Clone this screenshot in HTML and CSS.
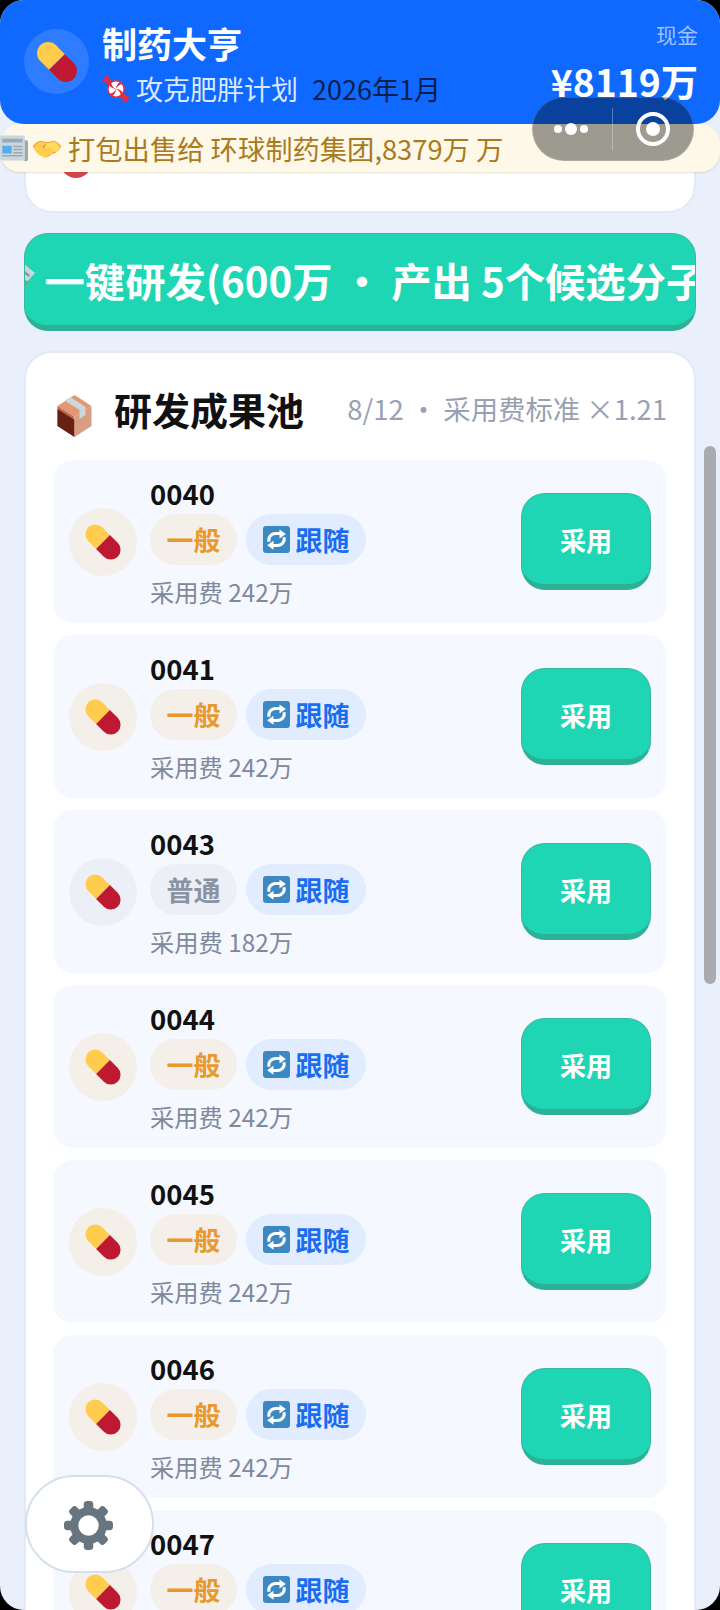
FILE: index.html
```html
<!DOCTYPE html>
<html>
<head>
  <title>制药大亨</title>
  <link rel="stylesheet" href="styles.css">
</head>

<body>
  <svg class="icon-defs" width="0" height="0">
    <symbol id="pill" viewBox="0 0 36 36">
      <g transform="rotate(45 18 18)">
        <path fill="#ffcc4d" d="M9 10h9v16H9a8 8 0 0 1 0-16z"/>
        <path fill="#be1931" d="M18 10h9a8 8 0 0 1 0 16h-9z"/>
      </g>
    </symbol>
    <symbol id="repeat" viewBox="0 0 36 36">
      <rect width="36" height="36" rx="4" fill="#3b88c3"/>
      <path fill="none" stroke="#fff" stroke-width="4" d="M8 21c-1.500-6 3-11 9-11h6"/>
      <path fill="#fff" d="M22 4.500 30.500 10.500 22 16.500z"/>
      <path fill="none" stroke="#fff" stroke-width="4" d="M28 15c1.500 6-3 11-9 11h-6"/>
      <path fill="#fff" d="M14 19.500 5.500 25.500 14 31.500z"/>
    </symbol>
  </svg>

  <div class="screen">
    <header class="topbar">
      <div class="topbar__avatar"><svg class="topbar__pill"><use href="#pill"/></svg></div>
      <div class="topbar__info">
        <h1 class="topbar__title">制药大亨</h1>
        <div class="topbar__sub">
          <svg class="topbar__candy" viewBox="0 0 36 36">
            <path fill="#dd2e44" d="M0 7 7 0l5 7 4 5-4 4-4-4zM36 29l-7 7-5-7-4-5 4-4 4 4z"/>
            <circle cx="18" cy="18" r="11.500" fill="#dd2e44"/>
            <circle cx="18" cy="18" r="9.500" fill="#fff"/>
            <g fill="#dd2e44">
              <path d="M18 18c0-4 2-7 5-9l3 3c-3 0-6 2-8 6z"/>
              <path d="M18 18c4 0 7 2 9 5l-3 3c0-3-2-6-6-8z"/>
              <path d="M18 18c0 4-2 7-5 9l-3-3c3 0 6-2 8-6z"/>
              <path d="M18 18c-4 0-7-2-9-5l3-3c0 3 2 6 6 8z"/>
            </g>
          </svg>
          <span class="topbar__plan">攻克肥胖计划</span>
          <span class="topbar__date">2026年1月</span>
        </div>
      </div>
      <div class="topbar__cash">
        <span class="topbar__cash-label">现金</span>
        <span class="topbar__cash-value">¥8119万</span>
      </div>
    </header>

    <div class="ticker">
      <svg class="ticker__paper" viewBox="0 0 36 36">
        <path fill="#99aab5" d="M30 8h4a2 2 0 0 1 2 2v22a3 3 0 0 1-6 0z"/>
        <path fill="#ccd6dd" d="M0 4a2 2 0 0 1 2-2h28a2 2 0 0 1 2 2v30H3a3 3 0 0 1-3-3z"/>
        <path fill="#99aab5" d="M3 6h26v5H3zM17 15h12v2H17zM17 19h12v2H17zM17 23h12v2H17zM3 27h26v2H3z"/>
        <path fill="#55acee" d="M3 15h12v10H3z"/>
      </svg>
      <svg class="ticker__hands" viewBox="0 0 36 36">
        <path fill="#f19020" d="M0 16c3-5 7-7 11-7l7 2 7-2c4 0 8 2 11 7-2 5-6 8-10 9l-6 4c-3 1-5 0-7-2-6-1-10-6-13-11z"/>
        <path fill="#ffcc4d" d="M1 17c3-5 6-7 10-7l7 2-5 3c-1 2 1 4 4 3l5-2 6 6-5 5-3 1-3 2c-3 1-5 0-6-2-5-1-8-6-10-11z"/>
        <path fill="#ffdc5d" d="M18 12l7-2c4 0 7 2 10 7-1 3-3 5-6 7l-7-7-5 2c-2 0-3-2-2-3z"/>
      </svg>
      <span class="ticker__text">打包出售给 环球制药集团,8379万 万</span>
    </div>

    <div class="capsule">
      <div class="capsule__dots"><i></i><i class="capsule__dot-big"></i><i></i></div>
      <div class="capsule__ring"></div>
    </div>

    <main class="content">
      <section class="card card--prev"><div class="card__peek"></div></section>

      <button class="research-btn">
        <svg class="research-btn__tube" viewBox="0 0 36 36">
          <path fill="#ccd6dd" d="M24 1 36 11 27 21 15 11z"/>
          <path fill="#8899a6" d="M22 6 31 13 29.500 15 20.500 8z"/>
          <path fill="#77b255" d="M21 15 30 20 25 26 17 21z"/>
        </svg>
        <span class="research-btn__label">一键研发(600万 · 产出 5个候选分子)</span>
      </button>

      <section class="card">
        <div class="pool-head">
          <svg class="pool-head__box" viewBox="0 0 36 44">
            <path fill="#e59672" d="M18 1 35 12 18 23 1 12z"/>
            <path fill="#c1694f" d="M1 12 18 23v20L1 32z"/>
            <path fill="#662113" d="M1 15 18 26v17L1 32z"/>
            <path fill="#d99e82" d="M35 12 18 23v20l17-11z"/>
            <path fill="#ccd6dd" d="M8 6.500 14 3l15 10v8l-6 4v-9z"/>
          </svg>
          <h2 class="pool-head__title">研发成果池</h2>
          <span class="pool-head__meta">8/12 · 采用费标准 ×1.21</span>
        </div>

        <ul class="pool">
          <li class="pool__item">
            <div class="pool__icon"><svg><use href="#pill"/></svg></div>
            <div class="pool__body">
              <span class="pool__name">0040</span>
              <div class="pool__tags"><span class="tag tag--common">一般</span><span class="tag tag--follow"><svg><use href="#repeat"/></svg>跟随</span></div>
              <span class="pool__fee">采用费 242万</span>
            </div>
            <button class="adopt-btn">采用</button>
          </li>
          <li class="pool__item">
            <div class="pool__icon"><svg><use href="#pill"/></svg></div>
            <div class="pool__body">
              <span class="pool__name">0041</span>
              <div class="pool__tags"><span class="tag tag--common">一般</span><span class="tag tag--follow"><svg><use href="#repeat"/></svg>跟随</span></div>
              <span class="pool__fee">采用费 242万</span>
            </div>
            <button class="adopt-btn">采用</button>
          </li>
          <li class="pool__item">
            <div class="pool__icon pool__icon--plain"><svg><use href="#pill"/></svg></div>
            <div class="pool__body">
              <span class="pool__name">0043</span>
              <div class="pool__tags"><span class="tag tag--plain">普通</span><span class="tag tag--follow"><svg><use href="#repeat"/></svg>跟随</span></div>
              <span class="pool__fee">采用费 182万</span>
            </div>
            <button class="adopt-btn">采用</button>
          </li>
          <li class="pool__item">
            <div class="pool__icon"><svg><use href="#pill"/></svg></div>
            <div class="pool__body">
              <span class="pool__name">0044</span>
              <div class="pool__tags"><span class="tag tag--common">一般</span><span class="tag tag--follow"><svg><use href="#repeat"/></svg>跟随</span></div>
              <span class="pool__fee">采用费 242万</span>
            </div>
            <button class="adopt-btn">采用</button>
          </li>
          <li class="pool__item">
            <div class="pool__icon"><svg><use href="#pill"/></svg></div>
            <div class="pool__body">
              <span class="pool__name">0045</span>
              <div class="pool__tags"><span class="tag tag--common">一般</span><span class="tag tag--follow"><svg><use href="#repeat"/></svg>跟随</span></div>
              <span class="pool__fee">采用费 242万</span>
            </div>
            <button class="adopt-btn">采用</button>
          </li>
          <li class="pool__item">
            <div class="pool__icon"><svg><use href="#pill"/></svg></div>
            <div class="pool__body">
              <span class="pool__name">0046</span>
              <div class="pool__tags"><span class="tag tag--common">一般</span><span class="tag tag--follow"><svg><use href="#repeat"/></svg>跟随</span></div>
              <span class="pool__fee">采用费 242万</span>
            </div>
            <button class="adopt-btn">采用</button>
          </li>
          <li class="pool__item">
            <div class="pool__icon"><svg><use href="#pill"/></svg></div>
            <div class="pool__body">
              <span class="pool__name">0047</span>
              <div class="pool__tags"><span class="tag tag--common">一般</span><span class="tag tag--follow"><svg><use href="#repeat"/></svg>跟随</span></div>
              <span class="pool__fee">采用费 242万</span>
            </div>
            <button class="adopt-btn">采用</button>
          </li>
        </ul>
      </section>
    </main>

    <div class="scrollbar"></div>

    <button class="settings">
      <svg class="settings__gear" viewBox="0 0 36 36">
        <g fill="#66757f">
          <rect x="14.500" y="0" width="7" height="36" rx="2.500"/>
          <rect x="14.500" y="0" width="7" height="36" rx="2.500" transform="rotate(45 18 18)"/>
          <rect x="14.500" y="0" width="7" height="36" rx="2.500" transform="rotate(90 18 18)"/>
          <rect x="14.500" y="0" width="7" height="36" rx="2.500" transform="rotate(135 18 18)"/>
        </g>
        <circle cx="18" cy="18" r="10.500" fill="none" stroke="#66757f" stroke-width="6"/>
        <circle cx="18" cy="18" r="7.500" fill="#fff"/>
      </svg>
    </button>
  </div>
</body>

</html>
```

FILE: styles.css
```css
* {
  box-sizing: border-box;
}

html,
body {
  margin: 0;
  height: 1610px;
  overflow: hidden;
  background-color: #000000;
}

body {
  font-family: "Noto Sans CJK SC", "Noto Sans", sans-serif;
  color: #111111;
}

button {
  font-family: inherit;
}

.icon-defs {
  display: block;
  height: 0;
}

.screen {
  position: relative;
  height: 1610px;
  border-radius: 24px;
  overflow: hidden;
  background-color: #e9f0fb;
}

/* top bar */
.topbar {
  position: relative;
  height: 124px;
  padding: 29px 22px 0 24px;
  display: flex;
  background-color: #0f69ff;
  border-radius: 0 0 24px 24px;
}

.topbar__avatar {
  width: 65px;
  height: 65px;
  margin-right: 13px;
  border-radius: 50%;
  background-color: rgba(255, 255, 255, 0.13);
  display: flex;
  align-items: center;
  justify-content: center;
}

.topbar__pill {
  width: 50px;
  height: 50px;
}

.topbar__info {
  flex: 1;
  margin-top: -8px;
}

.topbar__title {
  margin: 0;
  font-size: 35px;
  line-height: 44px;
  font-weight: 700;
  color: #ffffff;
}

.topbar__sub {
  margin-top: 5px;
  display: flex;
  align-items: center;
  font-size: 27px;
  line-height: 38px;
}

.topbar__candy {
  width: 28px;
  height: 28px;
  margin-right: 6px;
}

.topbar__plan {
  color: rgba(255, 255, 255, 0.85);
  margin-right: 14px;
}

.topbar__date {
  color: #0b1f4d;
}

.topbar__cash {
  margin-top: -10px;
  display: flex;
  flex-direction: column;
  align-items: flex-end;
}

.topbar__cash-label {
  font-size: 21px;
  line-height: 30px;
  color: rgba(255, 255, 255, 0.6);
}

.topbar__cash-value {
  margin-top: 7px;
  font-size: 37.300px;
  line-height: 50px;
  font-weight: 700;
  color: #ffffff;
}

/* news ticker */
.ticker {
  position: absolute;
  top: 124px;
  left: 0;
  right: 0;
  height: 48px;
  display: flex;
  align-items: center;
  background-color: #fef8e8;
  border-radius: 20px;
  box-shadow: 0px 1px 2px rgba(150, 120, 40, 0.2);
  white-space: nowrap;
}

.ticker__paper {
  width: 28px;
  height: 28px;
  flex-shrink: 0;
}

.ticker__hands {
  width: 28px;
  height: 28px;
  margin-left: 5px;
  margin-right: 7px;
  flex-shrink: 0;
}

.ticker__text {
  font-size: 27.300px;
  color: #a97a20;
}

/* floating mini program capsule */
.capsule {
  position: absolute;
  top: 97px;
  left: 532px;
  width: 162px;
  height: 64px;
  border-radius: 32px;
  background-color: rgba(0, 0, 0, 0.38);
  border: 1px solid rgba(255, 255, 255, 0.15);
  display: flex;
  align-items: center;
}

.capsule__dots {
  width: 80px;
  height: 42px;
  padding-right: 4px;
  border-right: 1px solid rgba(255, 255, 255, 0.3);
  display: flex;
  align-items: center;
  justify-content: center;
  gap: 3px;
}

.capsule__dots i {
  width: 8px;
  height: 8px;
  border-radius: 50%;
  background-color: #ffffff;
}

.capsule__dots .capsule__dot-big {
  width: 12px;
  height: 12px;
}

.capsule__ring {
  width: 34px;
  height: 34px;
  margin-left: 23px;
  border: 4px solid #ffffff;
  border-radius: 50%;
  display: flex;
  align-items: center;
  justify-content: center;
}

.capsule__ring::before {
  content: "";
  width: 14px;
  height: 14px;
  border-radius: 50%;
  background-color: #ffffff;
}

/* page content */
.content {
  padding: 0 24px;
}

.card {
  background-color: #ffffff;
  border: 2px solid #e2eaf6;
  border-radius: 28px;
  padding: 21px 27px 0;
}

.card--prev {
  height: 89px;
  border-top: none;
  border-radius: 0 0 28px 28px;
  padding: 22px 0 0 34px;
}

.card__peek {
  width: 32px;
  height: 32px;
  border-radius: 50%;
  background-color: #d9404f;
}

.research-btn {
  display: flex;
  align-items: center;
  justify-content: center;
  width: 100%;
  height: 98px;
  margin: 20px 0;
  padding: 0;
  font-size: 40.300px;
  font-weight: 700;
  color: #ffffff;
  background-color: #1fd6b4;
  border: 1px solid #39b8a1;
  border-bottom: 6px solid #2cb096;
  border-radius: 24px;
  white-space: nowrap;
  overflow: hidden;
}

.research-btn__tube {
  width: 36px;
  height: 36px;
  margin-right: 10px;
  flex-shrink: 0;
}

.research-btn__label {
  flex-shrink: 0;
}

.pool-head {
  display: flex;
  align-items: center;
  height: 68px;
}

.pool-head__box {
  width: 37px;
  height: 44px;
  margin: 16px 21px 0 3px;
}

.pool-head__title {
  margin: 0;
  font-size: 38px;
  font-weight: 700;
  color: #111111;
}

.pool-head__meta {
  margin-left: auto;
  font-size: 27.400px;
  color: #98a1b3;
  white-space: nowrap;
}

.pool {
  list-style: none;
  margin: 18px 0 0;
  padding: 0;
  display: flex;
  flex-direction: column;
  gap: 12px;
}

.pool__item {
  height: 163px;
  padding: 0 16px;
  display: flex;
  align-items: center;
  background-color: #f5f8ff;
  border-radius: 20px;
}

.pool__icon {
  width: 68px;
  height: 68px;
  margin-right: 13px;
  border-radius: 50%;
  background-color: #f5efe9;
  display: flex;
  align-items: center;
  justify-content: center;
  flex-shrink: 0;
}

.pool__icon--plain {
  background-color: #ecf0f6;
}

.pool__icon svg {
  width: 44px;
  height: 44px;
}

.pool__body {
  flex: 1;
  padding-top: 1px;
  display: flex;
  flex-direction: column;
}

.pool__name {
  font-size: 27.500px;
  line-height: 36px;
  font-weight: 700;
  color: #111111;
}

.pool__tags {
  margin-top: 3px;
  display: flex;
  gap: 9px;
}

.tag {
  height: 51px;
  padding: 0 16.500px;
  display: flex;
  align-items: center;
  font-size: 27px;
  font-weight: 700;
  border-radius: 26px;
}

.tag svg {
  width: 27px;
  height: 27px;
  margin-right: 6px;
}

.tag--common {
  color: #e8992e;
  background-color: #f5efe9;
}

.tag--plain {
  color: #8b93a3;
  background-color: #ecf0f6;
}

.tag--follow {
  color: #1a6df0;
  background-color: #e1ecff;
}

.pool__fee {
  margin-top: 10px;
  font-size: 24.300px;
  line-height: 34px;
  color: #7f899c;
}

.adopt-btn {
  width: 130px;
  height: 97px;
  padding: 0;
  font-size: 26px;
  font-weight: 700;
  color: #ffffff;
  background-color: #1fd6b4;
  border: 1px solid #39b8a1;
  border-bottom: 6px solid #2cb096;
  border-radius: 24px;
  flex-shrink: 0;
}

.scrollbar {
  position: absolute;
  top: 446px;
  left: 704px;
  width: 12px;
  height: 538px;
  border-radius: 6px;
  background-color: #a9abb0;
}

.settings {
  position: absolute;
  top: 1475px;
  left: 25px;
  width: 129px;
  height: 98px;
  padding: 3px 3px 0 0;
  display: flex;
  align-items: center;
  justify-content: center;
  background-color: #ffffff;
  border: 2px solid #d5e0ee;
  border-radius: 49px;
}

.settings__gear {
  width: 49px;
  height: 49px;
}
```
